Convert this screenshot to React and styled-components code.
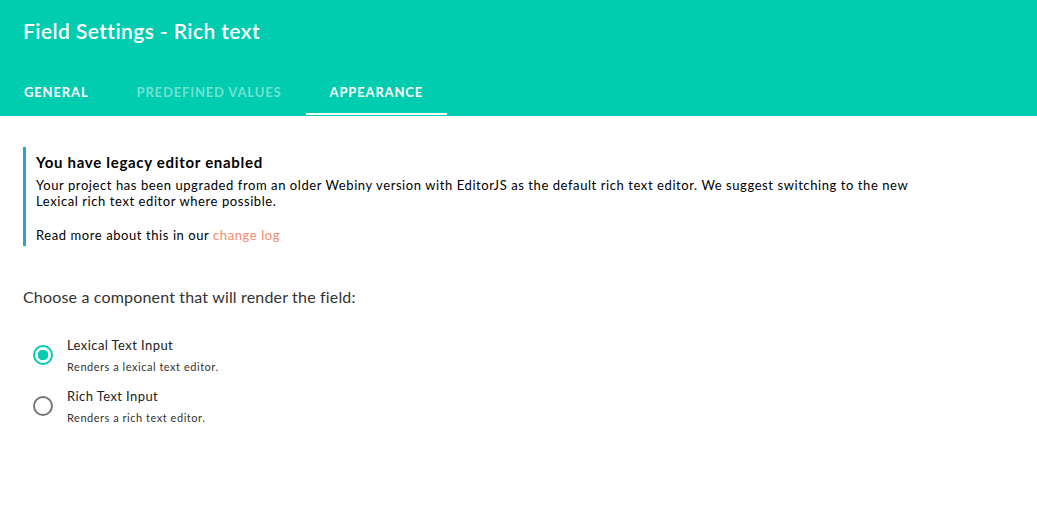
import styled, { createGlobalStyle } from "styled-components";

const GlobalStyle = createGlobalStyle`
  body {
    margin: 0;
    font-family: Lato, "Noto Sans", sans-serif;
    background: #ffffff;
    -webkit-font-smoothing: antialiased;
  }
`;

const Page = styled.div`
  width: 1037px;
  min-height: 507px;
  background: #ffffff;
`;

const Header = styled.div`
  background-color: #00ccb0;
  color: #ffffff;
`;

const Title = styled.h2`
  margin: 0;
  padding: 0 23px 6px;
  height: 68px;
  display: flex;
  align-items: center;
  box-sizing: border-box;
  font-size: 21px;
  font-weight: 600;
  line-height: 26px;
  letter-spacing: 0.42px;
`;

const TabBar = styled.div`
  display: flex;
  height: 48px;
  align-items: stretch;
`;

const Tab = styled.div`
  position: relative;
  display: flex;
  align-items: center;
  padding: 0 24px;
  padding-bottom: 1px;
  font-size: 13px;
  font-weight: 700;
  letter-spacing: 0.85px;
  text-transform: uppercase;
  color: ${(p) => (p.$dim ? "rgba(255,255,255,0.45)" : "#ffffff")};

  &::after {
    content: "";
    display: ${(p) => (p.$active ? "block" : "none")};
    position: absolute;
    left: 0;
    right: 0;
    bottom: 1px;
    height: 2px;
    background: #ffffff;
  }
`;

const Content = styled.div`
  padding: 31px 23px 0;
`;

const Alert = styled.div`
  border-left: 3px solid #2ba3d9;
  padding: 4px 0 1px 10px;
  width: 940px;
  color: #000000;
`;

const AlertTitle = styled.div`
  font-size: 15px;
  font-weight: 700;
  line-height: 20px;
  letter-spacing: 0.7px;
  margin-top: 1px;
  margin-bottom: 5px;
`;

const AlertText = styled.p`
  margin: 0 0 18px;
  font-size: 13px;
  line-height: 16px;
  letter-spacing: 0.58px;

  &:last-child {
    margin-bottom: 0;
    padding-bottom: 2px;
  }
`;

const Link = styled.a`
  color: #fa8a6b;
  text-decoration: none;
`;

const Question = styled.div`
  margin-top: 40px;
  font-size: 16px;
  line-height: 22px;
  letter-spacing: 0.17px;
  color: #333333;
`;

const Options = styled.div`
  margin-top: 28px;
  display: flex;
  flex-direction: column;
  gap: 13px;
`;

const Option = styled.label`
  display: flex;
  align-items: flex-start;
`;

const RadioOuter = styled.span`
  width: 42px;
  height: 42px;
  margin-left: -1px;
  margin-top: -2px;
  margin-bottom: -4px;
  display: flex;
  align-items: center;
  justify-content: center;
  flex-shrink: 0;

  &::before {
    content: "";
    box-sizing: border-box;
    width: 20px;
    height: 20px;
    border-radius: 50%;
    border: 2px solid ${(p) => (p.$checked ? "#00ccb0" : "rgba(0,0,0,0.54)")};
    background: ${(p) =>
      p.$checked
        ? "radial-gradient(circle, #00ccb0 0 5px, transparent 5.5px)"
        : "transparent"};
  }
`;

const OptionText = styled.div`
  display: flex;
  flex-direction: column;
  padding-left: 3px;
`;

const OptionLabel = styled.div`
  font-size: 13px;
  line-height: 18px;
  color: #222222;
  letter-spacing: 0.42px;
`;

const OptionHelp = styled.div`
  margin-top: 5px;
  font-size: 11px;
  line-height: 15px;
  color: #333333;
  letter-spacing: 0.53px;
`;

const options = [
  { label: "Lexical Text Input", help: "Renders a lexical text editor.", checked: true },
  { label: "Rich Text Input", help: "Renders a rich text editor.", checked: false },
];

export default function App() {
  return (
    <Page>
      <GlobalStyle />
      <Header>
        <Title>Field Settings - Rich text</Title>
        <TabBar>
          <Tab>General</Tab>
          <Tab $dim>Predefined values</Tab>
          <Tab $active>Appearance</Tab>
        </TabBar>
      </Header>
      <Content>
        <Alert>
          <AlertTitle>You have legacy editor enabled</AlertTitle>
          <AlertText>
            Your project has been upgraded from an older Webiny version with EditorJS as the default rich text editor. We suggest switching to the new
            <br />
            Lexical rich text editor where possible.
          </AlertText>
          <AlertText>
            Read more about this in our <Link href="#">change log</Link>
          </AlertText>
        </Alert>
        <Question>Choose a component that will render the field:</Question>
        <Options>
          {options.map((o) => (
            <Option key={o.label}>
              <RadioOuter $checked={o.checked} />
              <OptionText>
                <OptionLabel>{o.label}</OptionLabel>
                <OptionHelp>{o.help}</OptionHelp>
              </OptionText>
            </Option>
          ))}
        </Options>
      </Content>
    </Page>
  );
}
